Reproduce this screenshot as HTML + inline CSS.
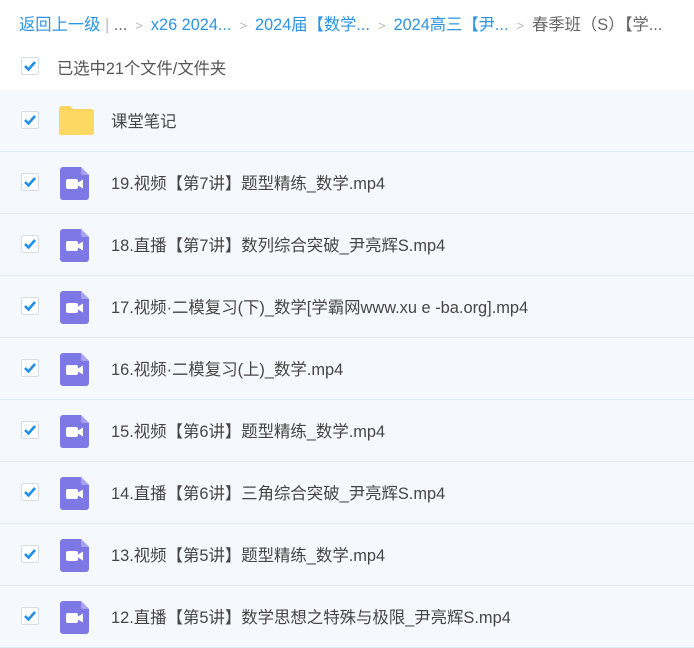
<!DOCTYPE html>
<html><head><meta charset="utf-8"><style>
body{margin:0;width:694px;height:646px;overflow:hidden;background:#fff;font-family:"Liberation Sans","Noto Sans CJK SC",sans-serif;}
.bc{position:absolute;left:19px;top:11px;font-size:16.3px;color:#2b95e3;white-space:nowrap;}
.bc .s{color:#bbb;margin:0 8px;font-size:13px}
.bc .g{color:#666}
.sel{position:absolute;left:57px;top:55px;font-size:16.3px;color:#555}
.cb{position:absolute;width:16px;height:16px;border:1px solid #d6dde5;border-radius:2px;background:#fff}
.cb svg{position:absolute;left:1px;top:2px}
.list{position:absolute;left:0;top:90px;width:694px}
.row{position:relative;height:61px;background:#f5f9fd;border-bottom:1.5px solid #e0eaf4}
.row .cb{left:21px;top:21px}
.row .t{position:absolute;left:111px;top:18px;font-size:16.4px;color:#454545;white-space:nowrap}
.vi{position:absolute;left:60px;top:15px}
</style></head><body>
<div class="bc">返回上一级<span style="color:#bbb"> | </span><span class="g">...</span><span class="s">&gt;</span>x26 2024...<span class="s">&gt;</span>2024届【数学...<span class="s">&gt;</span>2024高三【尹...<span class="s">&gt;</span><span class="g">春季班（S）【学...</span></div>
<div class="cb" style="left:21px;top:57px"><svg width="14" height="12" viewBox="0 0 14 12"><path d="M2 6l3.5 3.5L12 2" stroke="#1f8fe8" stroke-width="2.6" fill="none"/></svg></div>
<div class="sel">已选中21个文件/文件夹</div>
<div class="list">
<div class="row"><div class="cb"><svg width="14" height="12" viewBox="0 0 14 12"><path d="M2 6l3.5 3.5L12 2" stroke="#1f8fe8" stroke-width="2.6" fill="none"/></svg></div>
<svg style="position:absolute;left:58px;top:15px" width="36" height="30" viewBox="0 0 36 30"><path d="M1 4a3 3 0 0 1 3-3h8l3 3h18a3 3 0 0 1 3 3v20a3 3 0 0 1-3 3H4a3 3 0 0 1-3-3z" fill="#fbd45b"/><rect x="1" y="6" width="35" height="24" rx="2" fill="#fdd964"/></svg>
<div class="t">课堂笔记</div></div>
</div>
<script>
var items=["19.视频【第7讲】题型精练_数学.mp4","18.直播【第7讲】数列综合突破_尹亮辉S.mp4","17.视频·二模复习(下)_数学[学霸网www.xu e -ba.org].mp4","16.视频·二模复习(上)_数学.mp4","15.视频【第6讲】题型精练_数学.mp4","14.直播【第6讲】三角综合突破_尹亮辉S.mp4","13.视频【第5讲】题型精练_数学.mp4","12.直播【第5讲】数学思想之特殊与极限_尹亮辉S.mp4"];
var L=document.querySelector('.list'),h='';
items.forEach(function(t){h+='<div class="row"><div class="cb"><svg width="14" height="12" viewBox="0 0 14 12"><path d="M2 6l3.5 3.5L12 2" stroke="#1f8fe8" stroke-width="2.6" fill="none"/></svg></div><svg class="vi" width="29" height="33" viewBox="0 0 29 33"><path d="M3 0h18l8 8v22a3 3 0 0 1-3 3H3a3 3 0 0 1-3-3V3a3 3 0 0 1 3-3z" fill="#7d78e6"/><path d="M21 0l8 8h-6a2 2 0 0 1-2-2z" fill="#a8a3f0"/><rect x="6" y="12" width="12" height="10" rx="2" fill="#fff"/><path d="M18 15.5l5-3v9l-5-3z" fill="#fff"/></svg><div class="t">'+t+'</div></div>';});
L.insertAdjacentHTML('beforeend',h);
</script>
</body></html>
